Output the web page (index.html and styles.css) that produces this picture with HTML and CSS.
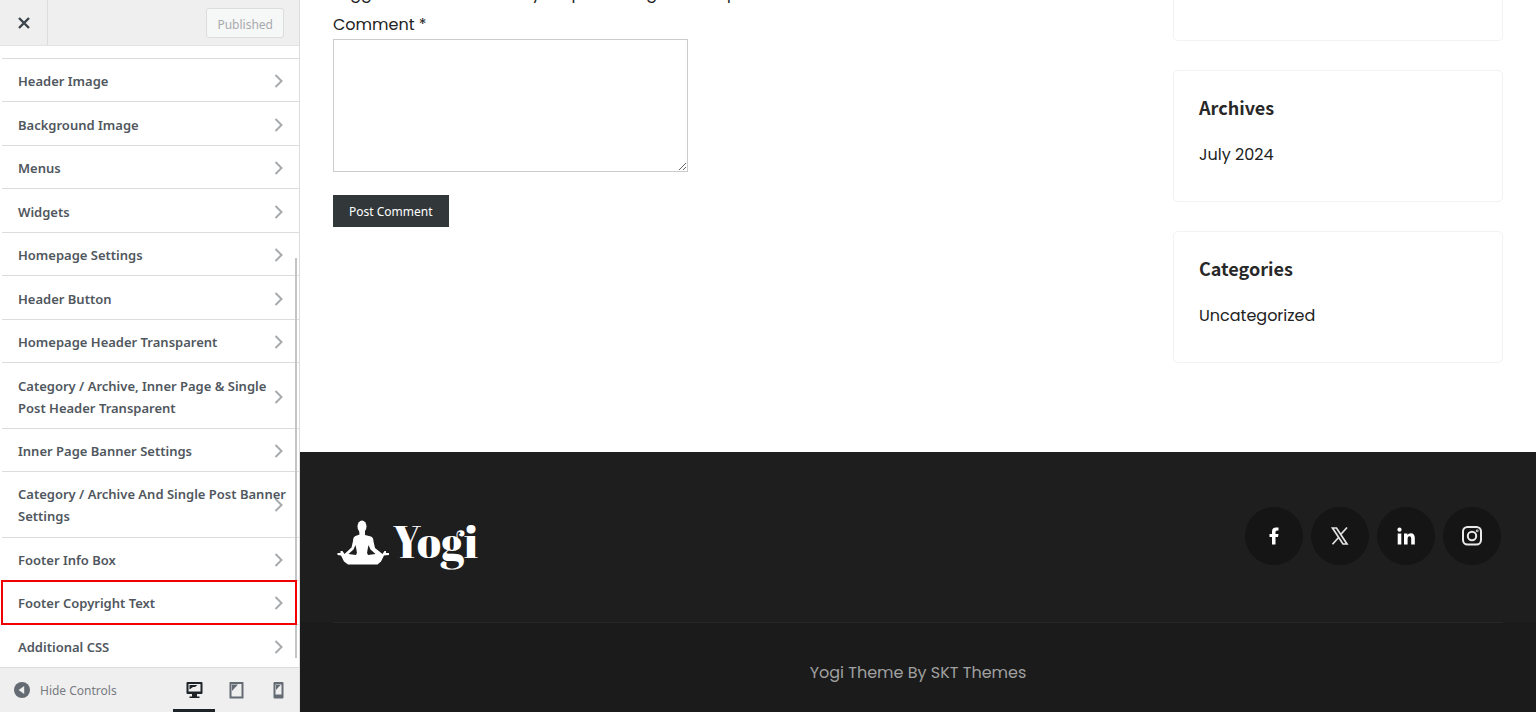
FILE: index.html
```
<!DOCTYPE html>
<html lang="en">
<head>
    <meta charset="UTF-8">
    <meta name="viewport" content="width=device-width, initial-scale=1.0">
    <title>Customize: Yogi</title>
    <link rel="stylesheet" href="styles.css">
</head>
<body>
<svg class="sprite" aria-hidden="true">
    <symbol id="chevron" viewBox="0 0 10 14">
        <path d="M1.500 1l6 6-6 6" fill="none" stroke="currentColor" stroke-width="2"/>
    </symbol>
</svg>

<!-- Customizer controls -->
<aside class="controls">
    <header class="controls-header">
        <button class="close" aria-label="Close">
            <svg width="12" height="12" viewBox="0 0 12 12"><path d="M1 1l10 10M11 1L1 11" stroke="currentColor" stroke-width="2.400"/></svg>
        </button>
        <button class="save" disabled>Published</button>
    </header>

    <nav class="sections">
        <button class="section"><span>Header Image</span><svg class="chevron"><use href="#chevron"/></svg></button>
        <button class="section"><span>Background Image</span><svg class="chevron"><use href="#chevron"/></svg></button>
        <button class="section"><span>Menus</span><svg class="chevron"><use href="#chevron"/></svg></button>
        <button class="section"><span>Widgets</span><svg class="chevron"><use href="#chevron"/></svg></button>
        <button class="section"><span>Homepage Settings</span><svg class="chevron"><use href="#chevron"/></svg></button>
        <button class="section"><span>Header Button</span><svg class="chevron"><use href="#chevron"/></svg></button>
        <button class="section"><span>Homepage Header Transparent</span><svg class="chevron"><use href="#chevron"/></svg></button>
        <button class="section"><span>Category / Archive, Inner Page &amp; Single<br>Post Header Transparent</span><svg class="chevron"><use href="#chevron"/></svg></button>
        <button class="section"><span>Inner Page Banner Settings</span><svg class="chevron"><use href="#chevron"/></svg></button>
        <button class="section"><span>Category / Archive And Single Post Banner<br>Settings</span><svg class="chevron"><use href="#chevron"/></svg></button>
        <button class="section"><span>Footer Info Box</span><svg class="chevron"><use href="#chevron"/></svg></button>
        <button class="section highlighted"><span>Footer Copyright Text</span><svg class="chevron"><use href="#chevron"/></svg></button>
        <button class="section"><span>Additional CSS</span><svg class="chevron"><use href="#chevron"/></svg></button>
        <div class="scroll-thumb"></div>
    </nav>

    <footer class="controls-footer">
        <button class="collapse">
            <svg width="16" height="16" viewBox="0 0 16 16"><circle cx="8" cy="8" r="8" fill="#656b72"/><path d="M10.200 4v8L4.600 8z" fill="#efefef"/></svg>
            <span>Hide Controls</span>
        </button>
        <div class="devices">
            <button class="device active" aria-label="Desktop">
                <svg width="17" height="17" viewBox="0 0 17 17" fill="currentColor"><path fill-rule="evenodd" d="M1.500 0h14q1 0 1 1v10q0 1-1 1H11v2.500h2.500V16h-10v-1.500H6V12H1.500q-1 0-1-1V1q0-1 1-1zM2.500 2v7.500h12V2z"/><path d="M3.500 3h8L9 5H7L3.500 7.500z"/></svg>
            </button>
            <button class="device" aria-label="Tablet">
                <svg width="15" height="17" viewBox="0 0 15 17" fill="currentColor"><path fill-rule="evenodd" d="M1 0h13q.5 0 .5.500v15.500q0 .5-.5.500H1q-.5 0-.5-.500V.5Q.5 0 1 0zM2.500 2v12.500h10V2z"/><path d="M3 2.500h6L3 9z"/></svg>
            </button>
            <button class="device" aria-label="Mobile">
                <svg width="11" height="17" viewBox="0 0 11 17" fill="currentColor"><path fill-rule="evenodd" d="M1.500 0h8q1 0 1 1v14.500q0 1-1 1h-8q-1 0-1-1V1q0-1 1-1zM2.500 2.500v10h6v-10z"/><path d="M3 3h4.500L3 8z"/></svg>
            </button>
        </div>
    </footer>
</aside>

<!-- Site preview -->
<div class="preview">
    <div class="content">
        <main class="comment-form">
            <p class="logged-in">Logged in as admin. Edit your profile. Log out? Required fields are marked *</p>
            <label for="comment">Comment *</label>
            <textarea id="comment"></textarea>
            <button class="submit">Post Comment</button>
        </main>
        <aside class="widgets">
            <section class="widget widget-cut"></section>
            <section class="widget">
                <h3>Archives</h3>
                <a href="#">July 2024</a>
            </section>
            <section class="widget">
                <h3>Categories</h3>
                <a href="#">Uncategorized</a>
            </section>
        </aside>
    </div>

    <footer class="site-footer">
        <div class="footer-top">
            <a class="logo" href="#">
                <svg width="52" height="46" viewBox="0 0 52 46" fill="#fff" aria-hidden="true">
                    <ellipse cx="25" cy="6.500" rx="4.500" ry="6"/>
                    <path d="M22 10h6v5l6 1.500q2.500 1 2.500 5l1.500 6.500 7.500 6 2-3h1.500v2h3v2l-5 .5-3 6-3.500 3H11l-4-3-3-6-3.500-.5v-2h3v-2h2l2 3 7-6.500 1.500-6.500q0-4 2.500-5l4-1.500z"/>
                    <path d="M18.500 25l-2 4.500-5 4.500 7.500 1q1.500-2 .5-5zM31.500 25l2 4.500 5 4.500-7.500 1q-1.500-2-.5-5z" fill="#1e1e1e"/>
                </svg>
                <span>Yogi</span>
            </a>
            <div class="social">
                <a href="#" aria-label="Facebook"><svg width="20" height="20" viewBox="0 0 20 20"><path d="M8 18.500v-7.500H5.500V8H8V5.500q0-4 4-4h2.500v3H13q-1.500 0-1.500 1.500v2h3L14 11h-2.500v7.500z" fill="#fff"/></svg></a>
                <a href="#" aria-label="X"><svg width="20" height="20" viewBox="0 0 20 20" fill="none" stroke="#e4e4e4" stroke-width="1.700"><path d="M2.500 2h4l10.500 16h-4zM17 1.500l-6.500 7.300M8.800 11.200l-6.300 7"/></svg></a>
                <a href="#" aria-label="LinkedIn"><svg width="20" height="20" viewBox="0 0 20 20" fill="#fff"><circle cx="3.500" cy="3.700" r="2.100"/><path d="M1.700 7.500h3.600v11H1.700zM8 7.500h3.400V9q1-1.700 3.400-1.700 4 0 4 4.700v6.500h-3.600v-6q0-2.300-1.700-2.300-1.900 0-1.900 2.300v6H8z"/></svg></a>
                <a href="#" aria-label="Instagram"><svg width="20" height="20" viewBox="0 0 20 20" fill="none" stroke="#eaeaea" stroke-width="2"><rect x="1" y="1" width="18" height="17.500" rx="4.500"/><circle cx="10" cy="10" r="4.200"/><circle cx="15.200" cy="4.800" r=".4"/></svg></a>
            </div>
        </div>
        <div class="copyright">Yogi Theme By SKT Themes</div>
    </footer>
</div>
</body>
</html>
```
FILE: styles.css
```
:root {
    --ui-font: "Noto Sans", "Open Sans", sans-serif;
    --site-font: Poppins, Inter, sans-serif;
}

* {
    box-sizing: border-box;
}

body {
    display: flex;
    height: 100vh;
    margin: 0;
    overflow: hidden;
    background: #fff;
    color: #222;
    font-family: var(--site-font);
    font-size: 16px;
    line-height: 24px;
}

button {
    border: none;
    background: none;
    font-family: var(--ui-font);
    cursor: pointer;
}

a {
    color: inherit;
    text-decoration: none;
}

.sprite {
    display: none;
}

/* Customizer controls */
.controls {
    display: flex;
    flex: 0 0 300px;
    flex-direction: column;
    border-right: 1px solid #dcdcde;
}

.controls-header {
    display: flex;
    flex: 0 0 46px;
    align-items: center;
    justify-content: space-between;
    padding-right: 15px;
    border-bottom: 1px solid #e4e4e4;
    background: #efefef;
}

.close {
    display: flex;
    align-items: center;
    justify-content: center;
    width: 48px;
    height: 45px;
    padding: 0;
    border-right: 1px solid #dcdcde;
    color: #3c434a;
}

.save {
    height: 30px;
    padding: 4px 10px 0;
    border: 1px solid #dcdcde;
    border-radius: 3px;
    background: #f6f7f7;
    color: #a7aaad;
    font-size: 12px;
}

.sections {
    position: relative;
    display: flex;
    flex: 1;
    flex-direction: column;
    padding: 12px 0 0 2px;
}

.section {
    position: relative;
    display: flex;
    flex: 1 0 auto;
    align-items: center;
    justify-content: space-between;
    padding: 11px 15px 9px 16px;
    border-top: 1px solid #dcdcde;
    color: #50575e;
    font-size: 13px;
    font-weight: 600;
    line-height: 22px;
    text-align: left;
    white-space: nowrap;
}

.section span {
    flex: 1;
    width: 0;
}

.chevron {
    width: 10px;
    height: 14px;
    color: #a7aaad;
}

.highlighted {
    z-index: 2;
}

/* Frame covers the borders above and below the row */
.highlighted::after {
    content: "";
    position: absolute;
    inset: -1px 2px -1px -1px;
    border: 2px solid #f00000;
}

.scroll-thumb {
    position: absolute;
    z-index: 1;
    right: 2px;
    bottom: 9px;
    width: 2px;
    height: 400px;
    background: #c3c4c6;
}

.controls-footer {
    display: flex;
    flex: 0 0 45px;
    justify-content: space-between;
    padding: 0 0 0 14px;
    border-top: 1px solid #dcdcde;
    background: #efefef;
}

.collapse {
    display: flex;
    align-items: center;
    gap: 10px;
    padding: 0;
    color: #787c82;
    font-size: 12px;
}

.devices {
    display: flex;
}

.device {
    display: flex;
    align-items: center;
    justify-content: center;
    width: 42px;
    padding: 4px 0 0;
    border-bottom: 3px solid transparent;
    color: #656b72;
}

.device.active {
    border-color: #1d2327;
    color: #1d2327;
}

/* Site preview */
.preview {
    display: flex;
    flex: 1;
    flex-direction: column;
    min-width: 0;
}

.content {
    display: flex;
    flex: 1;
    justify-content: space-between;
    padding: 0 33px;
}

.comment-form {
    display: flex;
    flex-direction: column;
    align-items: flex-start;
}

.logged-in {
    margin: -18px 0 7px;
}

.comment-form textarea {
    width: 355px;
    height: 133px;
    margin: 2px 0 23px;
    border: 1px solid #ccc;
}

.submit {
    padding: 9px 16px 7px;
    background: #32373a;
    color: #fff;
    font-size: 12px;
    line-height: 16px;
}

.widgets {
    display: flex;
    flex: 0 0 330px;
    flex-direction: column;
    gap: 29px;
}

.widget {
    padding: 23px 25px 34px;
    border: 1px solid #f1f2f4;
    border-radius: 5px;
}

.widget-cut {
    height: 41px;
    padding: 0;
    border-top: none;
    border-radius: 0 0 5px 5px;
}

.widget h3 {
    margin: 0 0 23px;
    color: #282828;
    font-family: "Noto Sans CJK SC", sans-serif;
    font-size: 18px;
    font-weight: 700;
    line-height: 26px;
}

.site-footer {
    height: 260px;
    background: #1b1b1b;
    color: #a0a0a0;
}

.footer-top {
    display: flex;
    justify-content: space-between;
    height: 170px;
    padding: 55px 35px 0 37px;
    background: #1e1e1e;
}

.logo {
    display: flex;
    gap: 4px;
    padding-top: 13px;
    color: #fff;
    font-family: "Abril Fatface", "Noto Serif Display", "Liberation Serif", serif;
    font-size: 44px;
    font-weight: 400;
    line-height: 42px;
}

.social {
    display: flex;
    gap: 8px;
}

.social a {
    display: flex;
    align-items: center;
    justify-content: center;
    width: 58px;
    height: 58px;
    border-radius: 50%;
    background: #151515;
}

.copyright {
    margin: 0 33px;
    padding-top: 38px;
    border-top: 1px solid #272727;
    text-align: center;
}
```
